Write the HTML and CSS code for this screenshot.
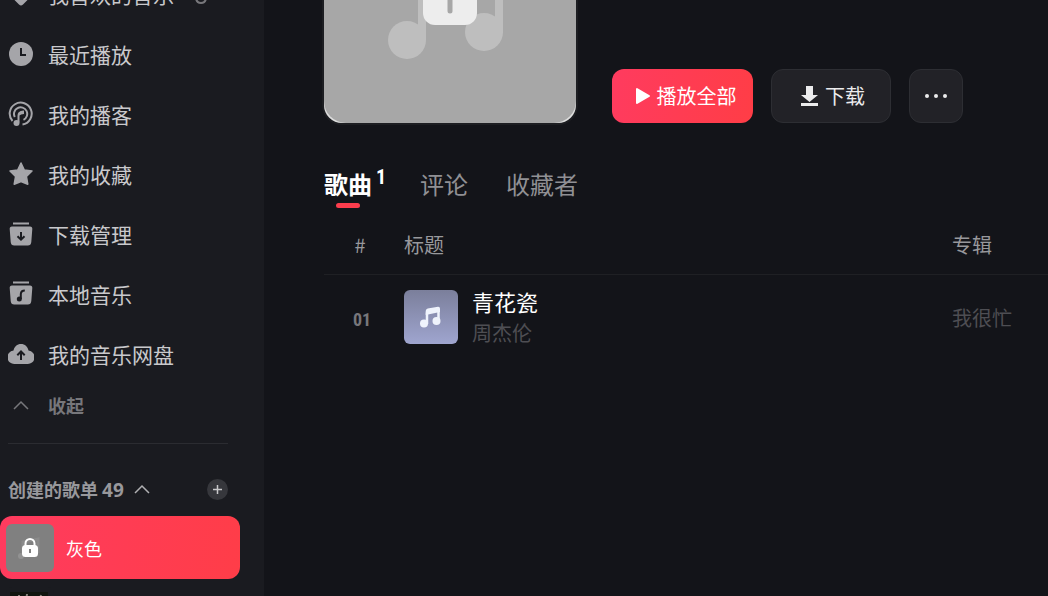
FILE: index.html
```html
<!DOCTYPE html>
<html lang="zh-CN">
<head>
<meta charset="utf-8">
<meta name="viewport" content="width=device-width, initial-scale=1">
<title>灰色</title>
<link rel="stylesheet" href="styles.css">
</head>
<body>
<div class="app">
  <aside class="sidebar">
    <nav class="nav">
      <a class="nav-item" href="#liked">
        <svg class="nav-icon" viewBox="0 0 26 26"><path d="M13 24.500q-1 0-2-1L2 14.500A6.500 6.500 0 0 1 13 6a6.500 6.500 0 0 1 11 8.500l-9 9q-1 1-2 1z"/></svg>
        <span>我喜欢的音乐</span>
        <svg class="nav-more" viewBox="0 0 14 22"><path d="M2 14q0 6 5 6t5-6"/></svg>
      </a>
      <a class="nav-item" href="#recent">
        <svg class="nav-icon" viewBox="0 0 26 26"><circle cx="13" cy="13" r="12"/><path class="cut-line" d="M13 7v7h5"/></svg>
        <span>最近播放</span>
      </a>
      <a class="nav-item" href="#podcast">
        <svg class="nav-icon" viewBox="0 0 26 26"><path class="line" d="M4.500 20A11 11 0 1 1 14.500 23.500M6.800 16A6.600 6.600 0 1 1 15.500 18.800M10.500 21.500V14.500q0-3 4-3.500"/><circle cx="8.500" cy="22" r="3"/><path d="M10 13q1-3.500 6-3.500V13q-3.500 0-4.500 1.500z"/></svg>
        <span>我的播客</span>
      </a>
      <a class="nav-item" href="#favorites">
        <svg class="nav-icon" viewBox="0 0 26 26"><path class="round" d="m13 2 3.300 7 7.700 1-5.600 5.400 1.400 7.800L13 20.500 6.200 23.200l1.400-7.800L2 10l7.700-1z"/></svg>
        <span>我的收藏</span>
      </a>
      <a class="nav-item" href="#downloads">
        <svg class="nav-icon" viewBox="0 0 26 26"><path d="M5 1.500h16v2H5zM4 5.500h18q2.500 0 2.300 2.500l-1 13q-.3 3.500-3.500 3.500H6.200q-3.200 0-3.500-3.500l-1-13Q1.500 5.500 4 5.500z"/><path class="cut-line" d="M13 11v7.500M9.500 15.300l3.500 3.400 3.500-3.400"/></svg>
        <span>下载管理</span>
      </a>
      <a class="nav-item" href="#local">
        <svg class="nav-icon" viewBox="0 0 26 26"><path d="M5 .500h16v2H5zM4 4.500h18q2.500 0 2.300 2.500l-1 13q-.3 3.500-3.500 3.500H6.200q-3.200 0-3.500-3.500l-1-13Q1.500 4.500 4 4.500z"/><path class="cut-line" d="M12.800 18v-5q.2-3.500 4-3.500"/><circle class="cut" cx="11.300" cy="18" r="2.500"/></svg>
        <span>本地音乐</span>
      </a>
      <a class="nav-item" href="#cloud">
        <svg class="nav-icon" viewBox="0 0 26 26"><path d="M7 23A6.500 6.500 0 0 1 5.500 9.500C6.500 5.500 9 3 13 3s6.500 2.500 7.500 6.500A6.500 6.500 0 0 1 19 23z"/><path class="cut-line" d="M13 19v-8M9.300 14.200l3.700-3.700 3.700 3.700"/></svg>
        <span>我的音乐网盘</span>
      </a>
    </nav>
    <button class="collapse" type="button">
      <svg class="collapse-icon" viewBox="0 0 26 26"><path d="m6 17 7-7 7 7"/></svg>
      <span>收起</span>
    </button>
    <div class="group-head">
      <button class="group-toggle" type="button">
        <span class="group-title">创建的歌单 <span class="count">49</span></span>
        <svg viewBox="0 0 18 18"><path d="m2 13 7-7 7 7"/></svg>
      </button>
      <button class="add" type="button" aria-label="新建歌单"><svg viewBox="0 0 21 21"><path d="M10.500 6v9M6 10.500h9"/></svg></button>
    </div>
    <a class="playlist active" href="#grey">
      <span class="playlist-cover"><svg viewBox="0 0 48 48"><path class="ghost" d="M17 31V18l15-3v14"/><circle class="ghost-dot" cx="15" cy="32" r="3"/><path class="shackle" d="M19.500 24v-4.500a4.500 4.500 0 0 1 9 0V24"/><rect class="lock" x="16" y="21" width="16" height="12" rx="3.500"/><path class="keyhole" d="M24 25v4"/></svg></span>
      <span>灰色</span>
    </a>
    <a class="playlist" href="#next" aria-label="歌单">
      <span class="playlist-cover art"><svg viewBox="0 0 48 48"><path class="art-dark" d="M4 5h38v30H4z"/><path class="art-light" d="M13 8v16M21 7l-2 17M35 8l-3 14"/><path class="art-red" d="M8 9v14"/><path class="art-green" d="M26 9v14"/></svg></span>
    </a>
  </aside>

  <main class="main">
    <header class="hero">
      <div class="cover">
        <svg viewBox="0 0 252 252"><circle class="note-head" cx="83" cy="169" r="19"/><circle class="note-head" cx="160" cy="161" r="19"/><rect class="note-bar" x="94" y="80" width="8" height="89"/><rect class="note-bar" x="171" y="80" width="8" height="82"/><path class="shackle-big" d="M110 105V89a17 17 0 0 1 34 0v16"/><rect class="lock-big" x="99" y="98" width="54" height="56" rx="12"/><path class="keyhole-big" d="M126 122v18"/></svg>
      </div>
      <div class="actions">
        <button class="btn primary" type="button"><svg class="play" viewBox="0 0 16 18"><path d="M2 2v14l12-7z"/></svg>播放全部</button>
        <button class="btn download" type="button"><svg class="down" viewBox="0 0 18 20"><path d="M5 0h7v9h5l-8.500 7L0 9h5z"/><path d="M0 17h17v3H0z"/></svg>下载</button>
        <button class="btn dots" type="button" aria-label="更多"><svg viewBox="0 0 24 6"><circle cx="3" cy="3" r="2"/><circle cx="12" cy="3" r="2"/><circle cx="21" cy="3" r="2"/></svg></button>
      </div>
    </header>
    <nav class="tabs">
      <a class="tab current" href="#songs">歌曲<sup>1</sup></a>
      <a class="tab" href="#comments">评论</a>
      <a class="tab" href="#collectors">收藏者</a>
    </nav>
    <table class="songs">
      <thead>
        <tr><th class="col-index">#</th><th>标题</th><th class="col-album">专辑</th></tr>
      </thead>
      <tbody>
        <tr>
          <td class="col-index"><span class="index">01</span></td>
          <td>
            <div class="song">
              <svg class="song-cover" viewBox="0 0 54 54"><path class="stem" d="M23 34V22.500M34.500 20V31"/><path class="beam" d="M21.700 21q0-2 2-2.500l10.300-1.800q2-.2 2 2V22l-14.300 3z"/><circle cx="20" cy="33.500" r="4"/><circle cx="32.500" cy="31" r="4"/></svg>
              <div class="song-text"><span class="song-name">青花瓷</span><span class="artist">周杰伦</span></div>
            </div>
          </td>
          <td class="col-album">我很忙</td>
        </tr>
      </tbody>
    </table>
  </main>
</div>
</body>
</html>
```

FILE: styles.css
```css
* { box-sizing: border-box; }

body {
  margin: 0;
  background: #131419;
  color: #fff;
  font-family: "Noto Sans CJK SC", sans-serif;
  font-size: 20px;
}

a { color: inherit; text-decoration: none; }

button {
  padding: 0;
  border: 0;
  background: none;
  color: inherit;
  font: inherit;
}

.app {
  display: grid;
  grid-template-columns: 264px 1fr;
  height: 100vh;
  overflow: hidden;
}

/* Sidebar */
.sidebar {
  background: #1a1b20;
  overflow: hidden;
}

.nav { margin-top: -36px; }

.nav-item {
  display: flex;
  align-items: center;
  gap: 14px;
  height: 60px;
  padding-left: 8px;
  color: #c9c9cc;
  font-size: 21px;
  line-height: 30px;
}

.nav-icon {
  width: 26px;
  height: 26px;
  fill: #a5a5a9;
}

.nav-icon .line {
  fill: none;
  stroke: #a5a5a9;
  stroke-width: 2;
}

.nav-icon .round {
  stroke: #a5a5a9;
  stroke-width: 1.5;
  stroke-linejoin: round;
}

.nav-icon .cut { fill: #1a1b20; }

.nav-icon .cut-line {
  fill: none;
  stroke: #1a1b20;
  stroke-width: 2;
}

.nav-more {
  width: 14px;
  height: 22px;
  margin-left: 6px;
  fill: none;
  stroke: #77777b;
  stroke-width: 2;
}

.collapse {
  display: flex;
  align-items: center;
  gap: 14px;
  width: 220px;
  height: 60px;
  margin-left: 8px;
  padding-bottom: 17px;
  border-bottom: 1px solid #2b2c31;
  color: #77777b;
  font-size: 18px;
  font-weight: 700;
}

.collapse-icon {
  width: 26px;
  height: 26px;
  fill: none;
  stroke: #77777b;
  stroke-width: 1.5;
}

.group-head {
  display: flex;
  align-items: center;
  justify-content: space-between;
  height: 72px;
  padding: 18px 36px 0 8px;
  color: #98989c;
}

.group-toggle {
  display: flex;
  align-items: center;
  gap: 9px;
  font-size: 18px;
  font-weight: 700;
}

.count {
  font-family: "Open Sans", "Noto Sans", sans-serif;
  font-size: 19px;
}

.group-toggle svg {
  width: 18px;
  height: 18px;
  fill: none;
  stroke: #b0b0b3;
  stroke-width: 1.5;
}

.add {
  display: flex;
  border-radius: 50%;
  background: #36373c;
}

.add svg {
  width: 21px;
  height: 21px;
  stroke: #c8c8ca;
  stroke-width: 1.5;
}

.playlist {
  display: flex;
  align-items: center;
  gap: 12px;
  height: 63px;
  margin-right: 24px;
  padding-left: 6px;
  font-size: 18px;
}

.playlist.active {
  border-radius: 12px;
  background: linear-gradient(100deg, #ff3b5f, #ff3d48);
}

.playlist-cover {
  width: 48px;
  height: 48px;
  overflow: hidden;
  border-radius: 6px;
  background: #808080;
}

.playlist-cover.art { background: #1a1b20; }
.playlist-cover svg { display: block; fill: none; }
.ghost { stroke: #8b8b8b; stroke-width: 3; }
.playlist-cover .ghost-dot { fill: #929292; }
.shackle { stroke: #fff; stroke-width: 2; }
.playlist-cover .lock { fill: #fff; }
.keyhole { stroke: #808080; stroke-width: 2; }
.playlist-cover .art-dark { fill: #11150f; }
.art-light { stroke: #85827b; stroke-width: 2; }
.art-red { stroke: #8a4a40; stroke-width: 1; }
.art-green { stroke: #3d6044; stroke-width: 2; }

/* Playlist page */
.main {
  min-width: 0;
  padding-left: 60px;
}

.hero {
  display: flex;
  align-items: flex-end;
  gap: 36px;
  margin-top: -129px;
}

.cover {
  width: 252px;
  height: 252px;
  overflow: hidden;
  border-radius: 18px;
  background: #dedede;
  box-shadow: 0 0 0 2px #1d1e22;
}

.cover svg {
  display: block;
  border-radius: 22px;
  background: #a7a7a7;
  fill: none;
}

.cover .note-head, .cover .note-bar { fill: #bebebe; }
.cover .lock-big { fill: #ededed; }
.shackle-big { stroke: #ededed; stroke-width: 8; }

.keyhole-big {
  stroke: #a7a7a7;
  stroke-width: 5;
  stroke-linecap: round;
}

.actions {
  display: flex;
  gap: 18px;
}

.btn {
  display: flex;
  align-items: center;
  justify-content: center;
  gap: 6px;
  min-width: 120px;
  height: 54px;
  border: 1px solid #2d2e33;
  border-radius: 12px;
  background: #222227;
  color: #ececed;
  line-height: 30px;
}

.btn.primary {
  min-width: 141px;
  padding-left: 6px;
  border: 0;
  background: linear-gradient(100deg, #ff3b5f, #ff3d46);
  color: #fff;
}

.btn.download { padding-left: 4px; }
.btn.dots { min-width: 54px; }
.btn svg { fill: currentColor; }

.play {
  width: 16px;
  height: 18px;
  stroke: currentColor;
  stroke-width: 2;
  stroke-linejoin: round;
}

.down {
  width: 18px;
  height: 20px;
}

.dots svg {
  width: 24px;
  height: 6px;
}

.tabs {
  display: flex;
  gap: 38px;
  height: 94px;
  padding-top: 42px;
  color: #909094;
  font-size: 24px;
  line-height: 38px;
}

.tab { position: relative; height: 43px; }

.tab.current {
  display: flex;
  gap: 4px;
  margin-right: -4px;
  color: #fff;
  font-weight: 700;
}

.tab.current::after {
  position: absolute;
  bottom: 0;
  left: 12px;
  width: 24px;
  height: 5px;
  border-radius: 3px;
  background: #fc3d4d;
  content: "";
}

.tab sup {
  font-family: "Roboto Condensed", Roboto, sans-serif;
  font-size: 20px;
  line-height: 24px;
}

.songs {
  width: 100%;
  border-collapse: collapse;
  table-layout: fixed;
  text-align: left;
}

.songs th, .songs td { padding: 0 8px; }

.songs th {
  height: 57px;
  padding-bottom: 2px;
  border-bottom: 1px solid #1f2024;
  color: #98989c;
  font-weight: 400;
}

.songs td { height: 86px; }
.songs .col-index { width: 72px; text-align: center; }
.songs .col-album { width: 104px; }
.songs td.col-album { color: #4e4e53; }

.index {
  padding-left: 4px;
  color: #77777b;
  font-family: "Roboto Condensed", Roboto, sans-serif;
  font-size: 18px;
  font-weight: 700;
}

.song {
  display: flex;
  align-items: center;
  gap: 14px;
}

.song-cover {
  width: 54px;
  height: 54px;
  border-radius: 6px;
  background: linear-gradient(#7b7f9b, #9fa5cf);
  fill: #eff3fc;
}

.song-cover .stem {
  fill: none;
  stroke: #eff3fc;
  stroke-width: 2.5;
}

.song-text {
  display: flex;
  flex-direction: column;
  line-height: 30px;
}

.song-name { font-size: 22px; }
.artist { padding-top: 2px; color: #4e4e53; }
```
